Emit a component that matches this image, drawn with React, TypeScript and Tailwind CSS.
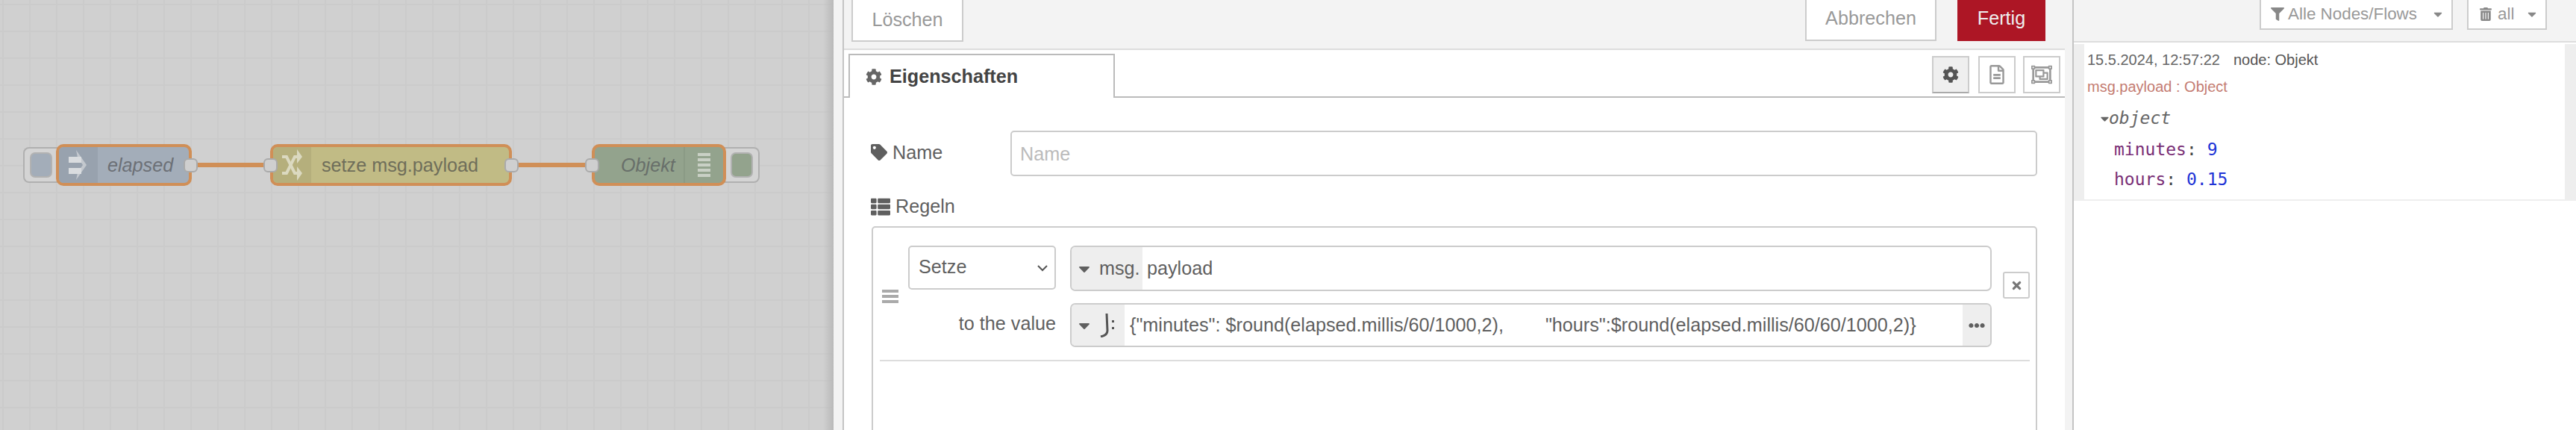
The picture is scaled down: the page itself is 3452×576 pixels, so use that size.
import type { ReactNode } from 'react';
import { FaCaretDown, FaCog, FaEllipsisH, FaFilter, FaRegFileAlt, FaRegObjectGroup, FaTag, FaThList, FaTimes, FaTrashAlt } from 'react-icons/fa';

const sans = 'font-["Liberation_Sans",Arial,sans-serif]';

function InjectIcon() {
  return (
    <svg width="24" height="40" viewBox="0 0 24 40">
      <path d="M10 0 L24 20 L10 40 L12 30 L19 20 L12 10 Z" fill="#c3c8ce" />
      <rect x="0" y="9" width="17" height="8" fill="#d9dcdf" />
      <rect x="0" y="24" width="17" height="8" fill="#d9dcdf" />
    </svg>
  );
}

function ShuffleIcon() {
  return (
    <svg width="27" height="42" viewBox="0 0 27 42" fill="none" stroke="#dbd9c0" strokeWidth="4">
      <path d="M0 10 L6 10 L17 32 L21 32" />
      <path d="M0 32 L6 32 L17 10 L21 10" />
      <path d="M20 0 L27 10 L20 19 Z" fill="#dbd9c0" stroke="none" />
      <path d="M20 23 L27 32 L20 42 Z" fill="#dbd9c0" stroke="none" />
    </svg>
  );
}

function Port({ className }: { className: string }) {
  return <div className={`absolute top-[212px] w-[19px] h-[19px] rounded-[6px] bg-[#cfcfcf] border-2 border-[#aaaaaa] ${className}`} />;
}

function FlowCanvas() {
  return (
    <div className="relative w-[1117px] h-[576px] shrink-0 overflow-hidden bg-[#d0d0d0] bg-[image:linear-gradient(to_right,#cbcbcb_2px,transparent_2px),linear-gradient(to_bottom,#cbcbcb_2px,transparent_2px)] bg-[size:36px_36px] bg-[position:3px_5px]">
      <div className="absolute top-0 right-0 w-[14px] h-full bg-linear-to-r from-transparent to-[#b9b9b9]" />

      {/* wires */}
      <div className="absolute left-[262px] top-[218px] w-[96px] h-[6px] bg-[#d08f57]" />
      <div className="absolute left-[692px] top-[218px] w-[96px] h-[6px] bg-[#d08f57]" />

      {/* inject */}
      <div className="absolute left-[31px] top-[197px] w-[50px] h-[48px] rounded-l-[8px] border-2 border-r-0 border-[#b0b0b0] bg-[#d4d4d4] flex items-center pl-[7px]">
        <div className="w-[30px] h-[34px] rounded-[7px] bg-[#a3adb9] border-2 border-[#b2b2b2]" />
      </div>
      <div className="absolute left-[75px] top-[193px] w-[182px] h-[56px] rounded-[10px] border-4 border-[#d08f57] bg-[#a3adb9] flex overflow-hidden">
        <div className="w-[52px] shrink-0 bg-[#98a2ae] flex items-center pl-[13px]">
          <InjectIcon />
        </div>
        <div className={`flex-1 pl-[13px] leading-[48px] text-[25.2px] italic text-[#6c7076] ${sans}`}>elapsed</div>
      </div>
      <Port className="left-[246px]" />

      {/* change */}
      <div className="absolute left-[362px] top-[193px] w-[324px] h-[56px] rounded-[10px] border-4 border-[#d08f57] bg-[#c1bb85] flex overflow-hidden">
        <div className="w-[51px] shrink-0 bg-[#b5af7c] flex items-center justify-center">
          <ShuffleIcon />
        </div>
        <div className={`flex-1 pl-[14px] leading-[48px] text-[25.2px] text-[#6f6e5a] ${sans}`}>setze msg.payload</div>
      </div>
      <Port className="left-[353px]" />
      <Port className="left-[676px]" />

      {/* debug */}
      <div className="absolute left-[968px] top-[197px] w-[50px] h-[48px] rounded-r-[8px] border-2 border-l-0 border-[#b0b0b0] bg-[#d4d4d4] flex items-center justify-end pr-[7px]">
        <div className="w-[30px] h-[34px] rounded-[7px] bg-[#93a38d] border-2 border-[#b2b2b2]" />
      </div>
      <div className="absolute left-[793px] top-[193px] w-[180px] h-[56px] rounded-[10px] border-4 border-[#d08f57] bg-[#93a38d] flex overflow-hidden">
        <div className={`flex-1 pl-[35px] leading-[48px] text-[25.2px] italic text-[#686f6a] ${sans}`}>Objekt</div>
        <div className="w-[53px] shrink-0 border-l-2 border-[#8a9a85] flex flex-col gap-[3px] items-center justify-center">
          <div className="w-[17px] h-[4px] bg-[#c9d0c5]" />
          <div className="w-[17px] h-[4px] bg-[#c9d0c5]" />
          <div className="w-[17px] h-[4px] bg-[#c9d0c5]" />
          <div className="w-[17px] h-[4px] bg-[#c9d0c5]" />
          <div className="w-[17px] h-[4px] bg-[#c9d0c5]" />
        </div>
      </div>
      <Port className="left-[784px]" />
    </div>
  );
}

function TabButton({ children, active }: { children: ReactNode; active?: boolean }) {
  return (
    <div className={`w-[50px] h-[50px] border-2 flex items-center justify-center ${active ? 'bg-[#efefef] border-[#ccc] border-b-[#aaa] text-[#555]' : 'bg-white border-[#ccc] text-[#999]'}`}>
      {children}
    </div>
  );
}

function EditorPanel() {
  return (
    <div className={`w-[1650px] shrink-0 h-[576px] flex flex-col border-x-2 border-[#c4c4c4] bg-[#f3f3f3] pr-[10px] overflow-hidden text-[25.2px] text-[#5f5f5f] ${sans}`}>
      <div className="h-[65px] shrink-0 flex items-start pl-[10px] pr-[26px] justify-between">
        <div className="w-[150px] h-[56px] bg-white border-2 border-t-0 border-[#ccc] text-[#999] text-center leading-[52px]">Löschen</div>
        <div className="flex gap-[28px]">
          <div className="w-[176px] h-[55px] bg-white border-2 border-t-0 border-[#ccc] text-[#999] text-center leading-[48px]">Abbrechen</div>
          <div className="w-[118px] h-[55px] bg-[#ad1625] text-[#eeeeee] text-center leading-[48px]">Fertig</div>
        </div>
      </div>

      <div className="flex-1 border-t-2 border-[#ddd] bg-white min-h-0">
        <div className="h-[64px] border-b-2 border-[#bbb] flex items-end justify-between pl-[6px] pr-[6px]">
          <div className="relative top-[2px] w-[357px] h-[59px] bg-white border-2 border-b-0 border-[#bbb] flex items-center pl-[21px] gap-[10px] font-bold text-[#444]">
            <FaCog size={22} className="text-[#666]" />
            <span>Eigenschaften</span>
          </div>
          <div className="flex items-center self-start mt-[8px]">
            <TabButton active><FaCog size={22} /></TabButton>
            <div className="w-[12px]" />
            <TabButton><FaRegFileAlt size={26} /></TabButton>
            <div className="w-[10px]" />
            <TabButton><FaRegObjectGroup size={28} /></TabButton>
          </div>
        </div>

        <div className="pt-[44px] pl-[36px] pr-[37px]">
          <div className="flex items-center h-[61px]">
            <div className="w-[187px] flex items-center gap-[7px] relative top-[-1px]">
              <FaTag size={22} />
              <span>Name</span>
            </div>
            <div className="flex-1 h-full border-2 border-[#ccc] rounded-[5px] pl-[11px] text-[#bbb] leading-[59px]">Name</div>
          </div>
          <div className="flex items-center gap-[7px] h-[26px] mt-[28px]">
            <FaThList size={26} />
            <span>Regeln</span>
          </div>

          <div className="mt-[13px] ml-[1px] h-[300px] border-2 border-[#ccc] rounded-[5px] pl-[9px] pr-[9px] pt-[24px]">
            <div className="flex items-center border-b-2 border-[#ddd] pb-[17px] w-[1541px]">
              <div className="w-[38px] h-[18px] flex flex-col justify-between pl-[3px] shrink-0">
                <div className="w-[22px] h-[4px] bg-[#aaa]" />
                <div className="w-[22px] h-[4px] bg-[#aaa]" />
                <div className="w-[22px] h-[4px] bg-[#aaa]" />
              </div>
              <div className="flex flex-col gap-[16px] w-[1452px] shrink-0">
                <div className="flex h-[61px]">
                  <div className="w-[198px] h-[59px] shrink-0 mr-[19px] border-2 border-[#ccc] rounded-[5px] bg-white flex items-center justify-between pl-[12px] pr-[8px]">
                    <span className="relative top-[-1px]">Setze</span>
                    <svg width="16" height="10" viewBox="0 0 16 10" fill="none" stroke="#555" strokeWidth="2"><path d="M2 2 L8 8 L14 2" /></svg>
                  </div>
                  <div className="flex-1 flex border-2 border-[#ccc] rounded-[7px] overflow-hidden">
                    <div className="w-[95px] bg-[#eee] flex items-center pl-[5px] gap-[8px]">
                      <FaCaretDown size={24} />
                      <span>msg.</span>
                    </div>
                    <div className="pl-[6px] leading-[57px]">payload</div>
                  </div>
                </div>
                <div className="flex h-[59px]">
                  <div className="w-[198px] shrink-0 mr-[19px] text-right leading-[55px]">to the value</div>
                  <div className="flex-1 flex border-2 border-[#ccc] rounded-[7px] overflow-hidden">
                    <div className="w-[71px] shrink-0 bg-[#eee] flex items-center pl-[5px] gap-[9px]">
                      <FaCaretDown size={24} />
                      <svg width="20" height="32" viewBox="0 0 20 32" fill="none" stroke="#555" strokeWidth="3">
                        <path d="M9 0 L10 23 Q10 29 1 31" />
                        <rect x="16" y="9" width="3" height="3" fill="#555" stroke="none" />
                        <rect x="16" y="18" width="3" height="3" fill="#555" stroke="none" />
                      </svg>
                    </div>
                    <div className="flex-1 pl-[7px] leading-[55px] whitespace-pre overflow-hidden">{'{"minutes": $round(elapsed.millis/60/1000,2),        "hours":$round(elapsed.millis/60/60/1000,2)}'}</div>
                    <div className="w-[37px] shrink-0 bg-[#eee] flex items-center justify-center"><FaEllipsisH size={22} /></div>
                  </div>
                </div>
              </div>
              <div className="ml-[15px] w-[36px] h-[36px] border-2 border-[#ccc] rounded-[3px] flex items-center justify-center text-[#777] relative top-[-15px]">
                <FaTimes size={17} />
              </div>
            </div>
          </div>
        </div>
      </div>
    </div>
  );
}

function DebugSidebar() {
  return (
    <div className={`flex-1 h-[576px] bg-white flex flex-col ${sans}`}>
      <div className="h-[57px] bg-[#f3f3f3] border-b-2 border-[#ddd] flex items-start pl-[249px] gap-[19px] text-[22.4px] text-[#999]">
        <div className="w-[259px] h-[40px] bg-white border-2 border-t-0 border-[#ccc] flex items-center pl-[13px] gap-[5px]">
          <FaFilter size={18} className="text-[#888]" />
          <span className="flex-1">Alle Nodes/Flows</span>
          <FaCaretDown size={18} className="mr-[9px] text-[#888]" />
        </div>
        <div className="w-[107px] h-[40px] bg-white border-2 border-t-0 border-[#ccc] flex items-center pl-[14px] gap-[7px]">
          <FaTrashAlt size={18} className="text-[#888]" />
          <span className="flex-1">all</span>
          <FaCaretDown size={18} className="mr-[9px] text-[#888]" />
        </div>
      </div>
      <div className="h-[210px] mt-[2px] pl-[14px] pr-[15px] bg-[#eee] pb-[2px]">
        <div className="h-full bg-white pl-[4px]">
          <div className="h-[39px] flex items-center gap-[18px] text-[#666] text-[20px] pt-[2px]">
            <span>15.5.2024, 12:57:22</span>
            <span className="text-[#555]">node: Objekt</span>
          </div>
          <div className="h-[32px] leading-[36px] text-[20px] text-[#c47c72]">msg.payload : Object</div>
          <div className={`pl-[18px] pt-[7px] font-["DejaVu_Sans_Mono",monospace] text-[23px]`}>
            <div className="h-[43px] flex items-center text-[#666] italic">
              <FaCaretDown size={20} className="w-[11px] shrink-0 not-italic" />
              <span>object</span>
            </div>
            <div className="h-[41px] pl-[18px] leading-[41px]"><span className="text-[#792e75]">minutes</span><span className="text-[#444]">: </span><span className="text-[#2033d6]">9</span></div>
            <div className="h-[39px] pl-[18px] leading-[39px]"><span className="text-[#792e75]">hours</span><span className="text-[#444]">: </span><span className="text-[#2033d6]">0.15</span></div>
          </div>
        </div>
      </div>
    </div>
  );
}

export default function App() {
  return (
    <div className="w-[3452px] h-[576px] flex overflow-hidden bg-white">
      <FlowCanvas />
      <div className="w-[12px] shrink-0 bg-[#f3f3f3]" />
      <EditorPanel />
      <DebugSidebar />
    </div>
  );
}
